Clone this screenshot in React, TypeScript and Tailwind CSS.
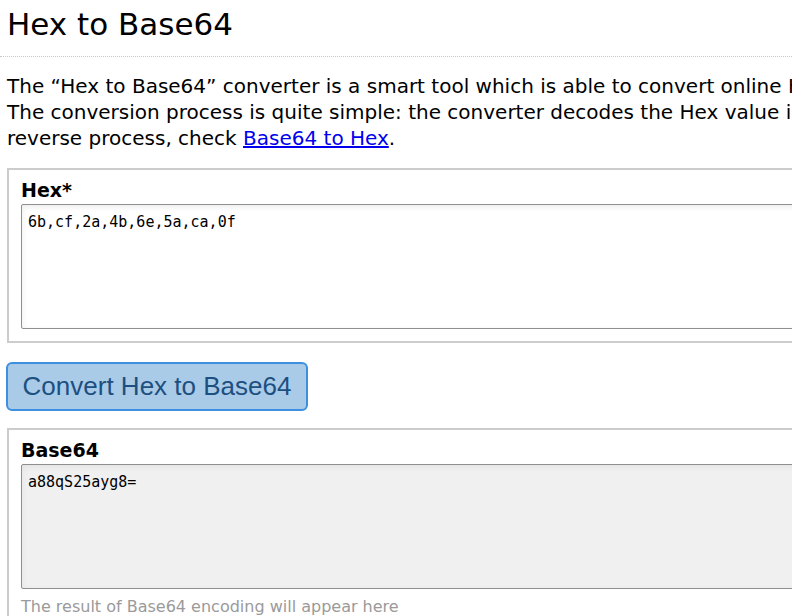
import React from 'react';

const verdana = { fontFamily: '"DejaVu Sans", Verdana, sans-serif' };

export default function App() {
  return (
    <div className="w-[792px] h-[616px] overflow-hidden bg-white text-black font-['DejaVu_Sans',Verdana,sans-serif]">
      <div className="w-[1100px] pl-[7px]">
        <h1 className="text-[31px] leading-[40px] pt-[4px] font-normal">Hex to Base64</h1>
        <div className="-ml-[7px] mt-[12px] border-t border-dotted border-[#c8c8c8]" />

        <p className="mt-[16px] text-[20px] leading-[26px] whitespace-nowrap">
          The “Hex to Base64” converter is a smart tool which is able to convert online Hex values to Base64.
          <br />
          The conversion process is quite simple: the converter decodes the Hex value into bytes. For the
          <br />
          reverse process, check{' '}
          <a href="#" className="text-[#0000ee] underline">
            Base64 to Hex
          </a>
          .
        </p>

        <fieldset className="mt-[17px] border-2 border-[#cccccc] px-[12px] pt-[8px] pb-[12px]">
          <label className="block text-[19px] leading-[24px] font-bold">Hex*</label>
          <textarea
            readOnly
            defaultValue="6b,cf,2a,4b,6e,5a,ca,0f"
            className="block w-full h-[125px] mt-[2px] resize-none border border-[#8f8f8f] rounded-[2px] bg-white px-[6px] pt-[8px] pb-[6px] text-[15px] leading-[18px] font-['DejaVu_Sans_Mono',monospace] shadow-[inset_0_2px_6px_rgba(0,0,0,0.08)] outline-none"
          />
        </fieldset>

        <button
          className="mt-[19px] -ml-[1px] block h-[49px] w-[302px] rounded-[6px] border-2 border-[#3d8fe0] bg-[#a9cbe8] text-[26px] text-[#1d4f80] font-['Liberation_Sans',Arial,sans-serif]"
        >
          Convert Hex to Base64
        </button>

        <fieldset className="mt-[17px] border-2 border-[#cccccc] px-[12px] pt-[8px] pb-[12px]">
          <label className="block text-[19px] leading-[24px] font-bold">Base64</label>
          <textarea
            readOnly
            defaultValue="a88qS25ayg8="
            className="block w-full h-[125px] mt-[2px] resize-none border border-[#8f8f8f] rounded-[2px] bg-[#f0f0f0] px-[6px] pt-[8px] pb-[6px] text-[15px] leading-[18px] font-['DejaVu_Sans_Mono',monospace] shadow-[inset_0_2px_6px_rgba(0,0,0,0.06)] outline-none"
          />
          <div className="mt-[6px] text-[16px] text-[#9a9a9a]" style={verdana}>
            The result of Base64 encoding will appear here
          </div>
        </fieldset>
      </div>
    </div>
  );
}
